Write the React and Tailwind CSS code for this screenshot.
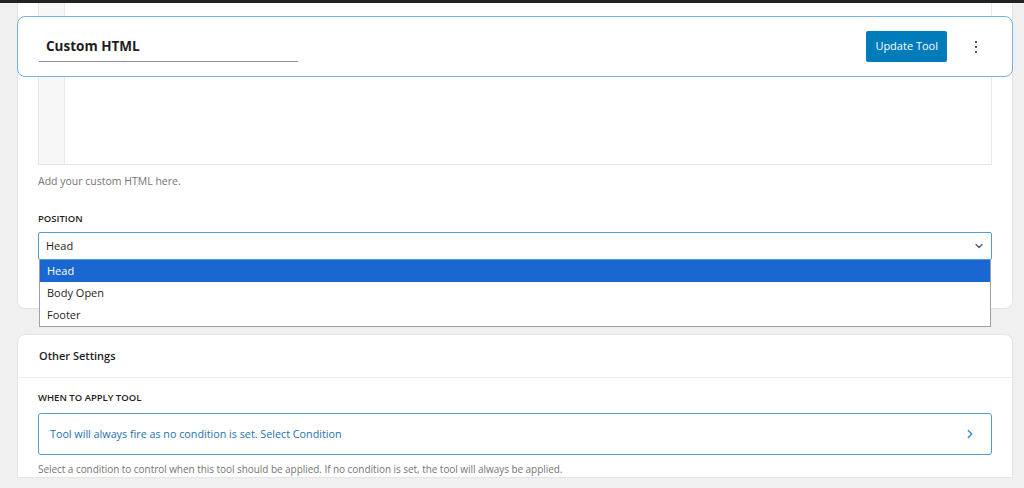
import { ChevronDown, ChevronRight } from 'lucide-react'

export default function App() {
  const options = ['Head', 'Body Open', 'Footer']

  return (
    <div className="h-[488px] overflow-hidden bg-[#f0f0f1] font-['Open_Sans',sans-serif] text-[#1e1e1e]">
      <div className="h-[3px] bg-[#1d2327]" />

      <div className="pl-[17px] pr-[11px]">
        {/* tool card */}
        <div className="relative bg-white rounded-b-lg border-x border-b border-[#e2e4e7] px-[20px] pb-[48px]">
          {/* code editor */}
          <div className="flex h-[162px] border-x border-b border-[#e6e6e6]">
            <div className="w-[26px] bg-[#f7f7f7] border-r border-[#e6e6e6]" />
            <div className="flex-1 bg-white" />
          </div>
          <p className="mt-[8px] text-[10.5px] leading-4 text-[#757575]">Add your custom HTML here.</p>

          <div className="mt-[22px] text-[9.5px] font-semibold uppercase leading-4 text-[#1e1e1e]">Position</div>
          <div className="relative mt-[5px]">
            <div className="flex h-[28px] items-center justify-between rounded-[2px] border border-[#4f9dd6] pl-[7px] pr-[6px] text-[11px]">
              <span>Head</span>
              <ChevronDown className="h-[12px] w-[12px] text-[#50575e]" strokeWidth={2.5} />
            </div>
            {/* open dropdown list */}
            <ul className="absolute left-[1px] right-[1px] top-[28px] z-10 border border-t-0 border-[#a0a0a0] bg-white text-[11px]">
              {options.map((o, i) => (
                <li
                  key={o}
                  className={`flex h-[22px] items-center pl-[7px] ${i === 0 ? 'bg-[#1a67d2] text-white' : 'text-[#1e1e1e]'}`}
                >
                  {o}
                </li>
              ))}
            </ul>
          </div>

          {/* sticky header */}
          <div className="absolute left-[-1px] right-[-1px] top-[13px] z-20 flex h-[61px] items-center justify-between rounded-lg border-[1.5px] border-[#72b4e4] bg-white pl-[21px] pr-[35px]">
            <div className="mt-[4px] w-[259px] border-b border-[#8c8f94] pb-[5px] pl-[7px] text-[13.5px] font-bold leading-5 text-[#1e1e1e]">
              Custom HTML
            </div>
            <div className="flex items-center gap-[28px]">
              <button className="h-[31px] rounded-[2px] bg-[#007cba] px-[9px] text-[11px] text-white">Update Tool</button>
              <div className="flex flex-col gap-[3px]">
                <span className="h-[2px] w-[2px] rounded-full bg-[#1e1e1e]" />
                <span className="h-[2px] w-[2px] rounded-full bg-[#1e1e1e]" />
                <span className="h-[2px] w-[2px] rounded-full bg-[#1e1e1e]" />
              </div>
            </div>
          </div>
        </div>

        {/* other settings */}
        <div className="mt-[25px] rounded-t-lg border border-[#e2e4e7] bg-white">
          <div className="flex h-[43px] items-center border-b border-[#ececec] px-[21px] text-[11px] font-semibold">
            Other Settings
          </div>
          <div className="px-[20px] pt-[12px]">
            <div className="text-[9.5px] font-semibold uppercase leading-4">When to apply tool</div>
            <div className="mt-[7px] flex h-[42px] items-center justify-between rounded-[3px] border border-[#4f9dd6] pl-[11px] pr-[14px] text-[10.75px] text-[#2271b1]">
              <span>Tool will always fire as no condition is set. Select Condition</span>
              <ChevronRight className="h-[14px] w-[14px] text-[#2f86c6]" strokeWidth={2.2} />
            </div>
            <p className="mt-[6px] text-[10px] leading-4 tracking-[-0.05px] text-[#757575]">
              Select a condition to control when this tool should be applied. If no condition is set, the tool will always be applied.
            </p>
          </div>
        </div>
      </div>
    </div>
  )
}
